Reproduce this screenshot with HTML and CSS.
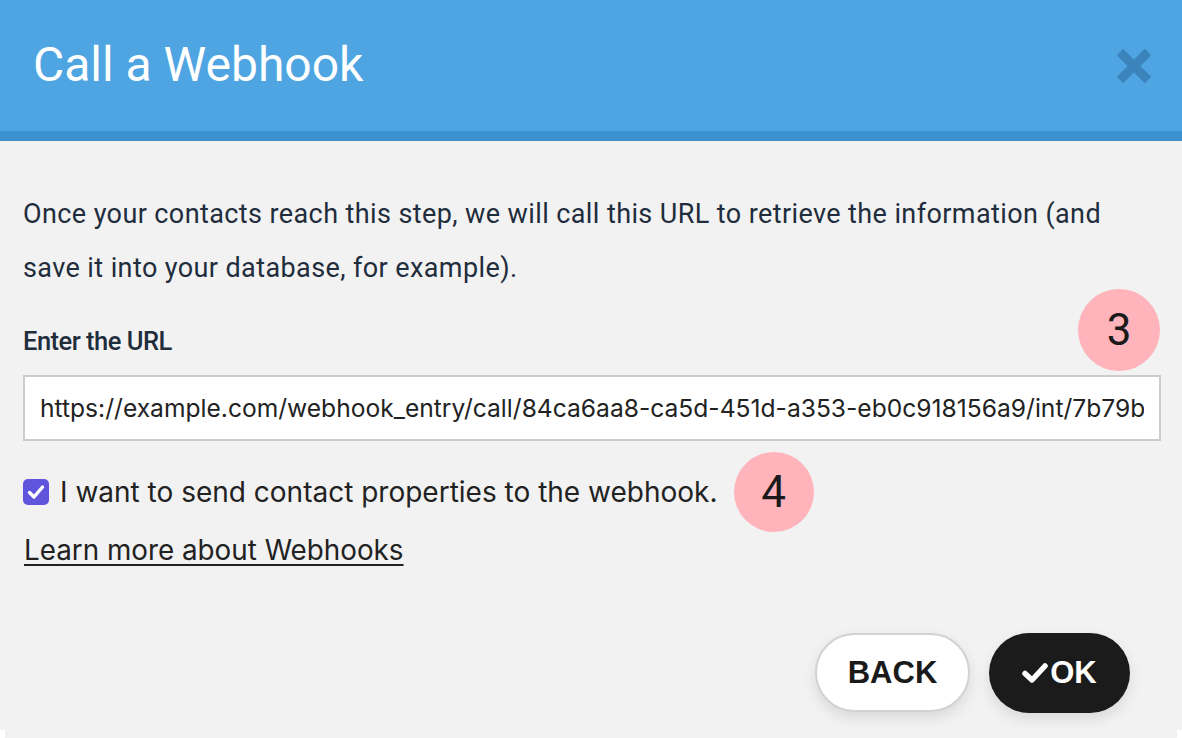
FILE: index.html
```html
<!DOCTYPE html>
<html lang="en">
<head>
<meta charset="utf-8">
<title>Call a Webhook</title>
<link rel="stylesheet" href="styles.css">
</head>
<body>
<div class="modal">
  <header class="modal-header">
    <h1 class="modal-title">Call a Webhook</h1>
    <button class="close-btn" aria-label="Close">
      <svg width="36" height="36" viewBox="0 0 36 36"><path d="M4 4 L32 32 M32 4 L4 32" stroke="#3a83bb" stroke-width="9" stroke-linecap="butt"/></svg>
    </button>
  </header>
  <main class="modal-body">
    <p class="intro">Once your contacts reach this step, we will call this URL to retrieve the information (and save it into your database, for example).</p>
    <div class="field">
      <label class="field-label" for="url">Enter the URL</label>
      <span class="badge badge-3">3</span>
      <input id="url" class="url-input" type="text" value="https://example.com/webhook_entry/call/84ca6aa8-ca5d-451d-a353-eb0c918156a9/int/7b79b4c2-a1f0">
    </div>
    <div class="check-row">
      <span class="checkbox"><svg width="18" height="16" viewBox="0 0 18 16"><path d="M2.5 8.5 L7 13 L15.5 3" fill="none" stroke="#fff" stroke-width="3.4" stroke-linecap="round" stroke-linejoin="round"/></svg></span>
      <span class="check-label">I want to send contact properties to the webhook.</span>
      <span class="badge badge-4">4</span>
    </div>
    <a class="learn-link" href="#">Learn more about Webhooks</a>
    <div class="actions">
      <button class="btn btn-back">BACK</button>
      <button class="btn btn-ok"><svg width="26" height="22" viewBox="0 0 26 22"><path d="M3 11.5 L10 18 L23 4" fill="none" stroke="#fff" stroke-width="5.5" stroke-linecap="round" stroke-linejoin="round"/></svg>OK</button>
    </div>
  </main>
  <div class="bottom-edge"><div class="bottom-inner"></div></div>
</div>
</body>
</html>
```
FILE: styles.css
```css
* { box-sizing: border-box; }
html, body { margin: 0; padding: 0; }
body {
  background: #ffffff;
  font-family: Roboto, "Liberation Sans", sans-serif;
  width: 1182px;
  height: 738px;
  overflow: hidden;
}
.modal { display: flex; flex-direction: column; height: 738px; }
.modal-header {
  height: 141px;
  background: #4ea5e1;
  border-bottom: 10px solid #3b92cf;
  display: flex;
  align-items: center;
  justify-content: space-between;
  padding: 0 30px 0 33px;
  flex: none;
}
.modal-title {
  margin: 0;
  color: #ffffff;
  font-family: Roboto, sans-serif;
  font-weight: 400;
  font-size: 48px;
  line-height: 1;
  margin-top: -2px;
}
.close-btn {
  background: none;
  border: 0;
  padding: 0;
  width: 36px;
  height: 36px;
  display: flex;
  cursor: pointer;
}
.modal-body {
  flex: 1;
  background: #f2f2f2;
  padding: 46px 21px 0 23px;
  display: flex;
  flex-direction: column;
}
.intro {
  margin: 0;
  font-size: 27px;
  letter-spacing: 0.4px;
  line-height: 54px;
  color: #1f2d3d;
}
.field { position: relative; margin-top: 31px; display: flex; flex-direction: column; }
.field-label {
  font-size: 25.5px;
  letter-spacing: -0.5px;
  font-weight: 500;
  color: #1f2d3d;
  line-height: 30px;
  margin-bottom: 19px;
}
.url-input {
  height: 66px;
  width: 100%;
  border: 2px solid #cccccc;
  background: #ffffff;
  padding: 0 15px;
  font-family: Inter, "Liberation Sans", sans-serif;
  font-size: 24.6px;
  color: #222222;
  outline: none;
}
.badge {
  position: absolute;
  width: 82px;
  height: 82px;
  border-radius: 50%;
  background: #ffb3bb;
  color: #1a1a1a;
  font-family: Roboto, sans-serif;
  font-size: 44px;
  display: flex;
  align-items: center;
  justify-content: center;
}
.badge-3 { right: 1px; top: -37px; }
.check-row {
  position: relative;
  display: flex;
  align-items: center;
  gap: 11px;
  margin-top: 38px;
  height: 26px;
}
.checkbox {
  width: 26px;
  height: 26px;
  border-radius: 5px;
  background: #5f55dc;
  display: flex;
  align-items: center;
  justify-content: center;
  flex: none;
}
.check-label {
  font-family: Inter, "Liberation Sans", sans-serif;
  font-size: 28px;
  color: #222222;
}
.badge-4 { position: relative; width: 80px; height: 80px; margin-left: 5px; flex: none; }
.learn-link {
  align-self: flex-start;
  margin-top: 28px;
  margin-left: 1px;
  font-family: Inter, "Liberation Sans", sans-serif;
  font-size: 27.8px;
  color: #222222;
  text-decoration: underline;
  text-decoration-thickness: 2px;
  text-underline-offset: 4px;
}
.actions {
  display: flex;
  justify-content: flex-end;
  gap: 19px;
  margin-top: auto;
  margin-bottom: 17px;
  padding-right: 31px;
}
.btn {
  height: 79px;
  border-radius: 40px;
  font-family: "Liberation Sans", Arial, sans-serif;
  font-weight: 700;
  font-size: 31px;
  display: flex;
  align-items: center;
  justify-content: center;
  cursor: pointer;
  box-shadow: 0 6px 14px rgba(0,0,0,0.10);
}
.btn-back {
  width: 155px;
  background: #ffffff;
  color: #1a1a1a;
  border: 2px solid #d2d2d2;
}
.btn-ok {
  width: 141px;
  height: 80px;
  background: #1b1b1b;
  color: #ffffff;
  border: 0;
  gap: 2px;
}
.bottom-edge { height: 8px; background: #ffffff; flex: none; }
.bottom-inner { height: 8px; margin: 0 5px; background: #f2f2f2; }
```
